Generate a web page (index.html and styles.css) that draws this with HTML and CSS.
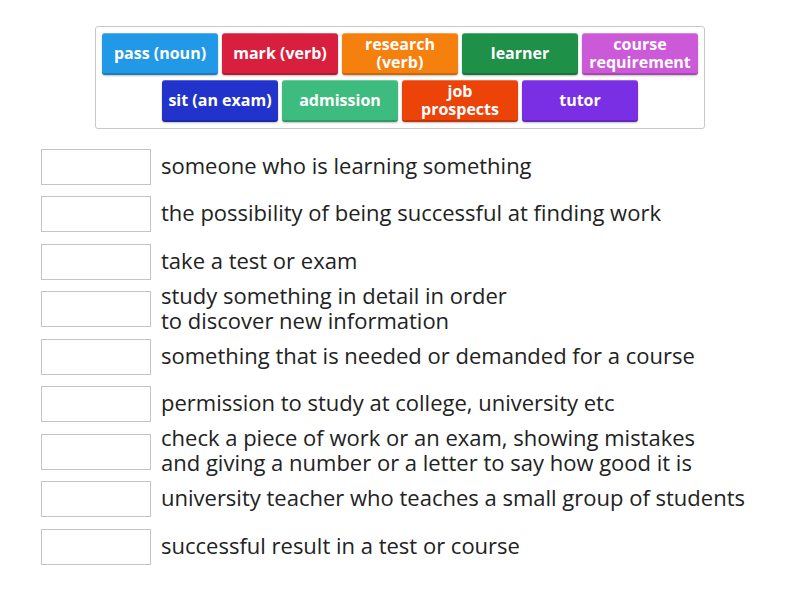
FILE: index.html
```html
<!DOCTYPE html>
<html lang="en">
<head>
    <meta charset="UTF-8">
    <title>Match up</title>
    <link rel="stylesheet" href="styles.css">
</head>
<body>
    <div class="bank">
        <div class="tile blue">pass (noun)</div>
        <div class="tile crimson">mark (verb)</div>
        <div class="tile orange">research (verb)</div>
        <div class="tile green">learner</div>
        <div class="tile violet">course requirement</div>
        <div class="tile navy">sit (an exam)</div>
        <div class="tile mint">admission</div>
        <div class="tile red">job prospects</div>
        <div class="tile purple">tutor</div>
    </div>

    <div class="rows">
        <div class="row"><div class="slot"></div><div class="def">someone who is learning something</div></div>
        <div class="row"><div class="slot"></div><div class="def">the possibility of being successful at finding work</div></div>
        <div class="row"><div class="slot"></div><div class="def">take a test or exam</div></div>
        <div class="row"><div class="slot"></div><div class="def">study something in detail in order<br>to discover new information</div></div>
        <div class="row"><div class="slot"></div><div class="def">something that is needed or demanded for a course</div></div>
        <div class="row"><div class="slot"></div><div class="def">permission to study at college, university etc</div></div>
        <div class="row"><div class="slot"></div><div class="def">check a piece of work or an exam, showing mistakes<br>and giving a number or a letter to say how good it is</div></div>
        <div class="row"><div class="slot"></div><div class="def">university teacher who teaches a small group of students</div></div>
        <div class="row"><div class="slot"></div><div class="def">successful result in a test or course</div></div>
    </div>
</body>
</html>
```

FILE: styles.css
```css
body {
    margin: 0;
    background: white;
    font-family: "Open Sans", sans-serif;
    color: #222;
}
.bank {
    width: 596px;
    margin: 26px 0 0 95px;
    padding: 6px;
    border: 1px solid #c8c8c8;
    border-radius: 3px;
    display: flex;
    flex-wrap: wrap;
    justify-content: center;
    gap: 5px 4px;
}
.tile {
    width: 116px;
    height: 42px;
    box-sizing: border-box;
    border-radius: 3px;
    display: flex;
    align-items: center;
    justify-content: center;
    text-align: center;
    color: white;
    font-weight: bold;
    font-size: 16px;
    line-height: 18px;
    padding: 0 6px 2px;
    border-top: 1px solid rgba(255,255,255,0.25);
    border-bottom: 2px solid rgba(0,0,0,0.18);
    box-shadow: 0 1px 2px rgba(0,0,0,0.25);
}
.blue { background: #2299e6; }
.crimson { background: #d8203e; }
.orange { background: #f6800e; }
.green { background: #1f9048; }
.violet { background: #cc5ad8; }
.navy { background: #2233cc; }
.mint { background: #3ebc80; }
.red { background: #ec4309; }
.purple { background: #7b2fe4; }
.rows {
    margin: 14px 0 0 41px;
}
.row {
    height: 47.5px;
    display: flex;
    align-items: center;
}
.slot {
    width: 110px;
    height: 36px;
    box-sizing: border-box;
    border: 1px solid #c4c4c4;
    background: white;
    flex-shrink: 0;
}
.def {
    margin: 0 0 3px 10px;
    font-size: 22px;
    line-height: 25px;
    white-space: nowrap;
}
```
